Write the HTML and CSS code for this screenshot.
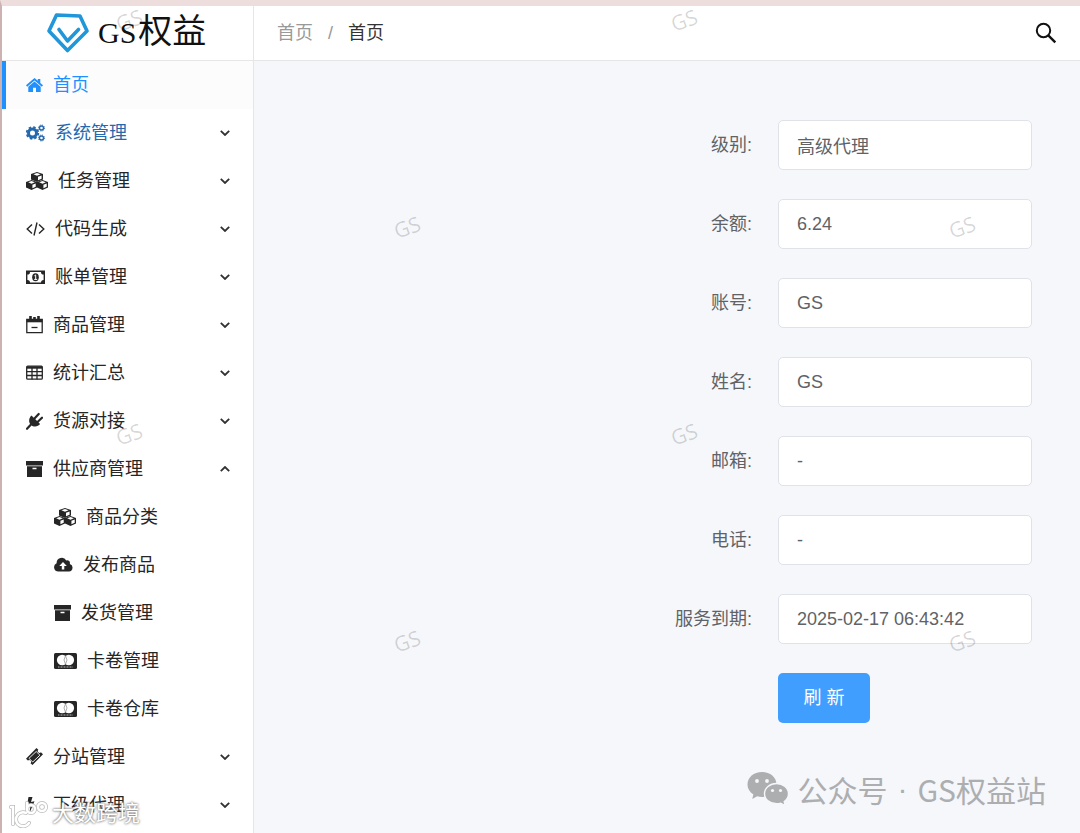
FILE: index.html
```html
<!DOCTYPE html>
<html lang="zh-CN">
<head>
    <meta charset="UTF-8">
    <meta name="viewport" content="width=device-width, initial-scale=1.0">
    <title>GS权益</title>
    <link rel="stylesheet" href="styles.css">
</head>
<body>
    <!-- icons used more than once -->
    <svg class="sprite" aria-hidden="true">
        <symbol id="cube" viewBox="0 0 12 11" preserveAspectRatio="none">
            <path d="M6 0l6 2.200v6L6 11 0 8.200v-6z" fill="currentColor"/>
            <path d="M6 1.100l3.600 1.400L6 4 2.400 2.500zM7 5.300l3.600-1.500v3.500L7 9.200z" fill="#fff"/>
        </symbol>
        <symbol id="cubes" viewBox="0 0 22 18">
            <use href="#cube" x="5" y="0" width="12" height="10"/>
            <use href="#cube" x="0" y="8" width="11" height="10"/>
            <use href="#cube" x="11" y="8" width="11" height="10"/>
        </symbol>
        <symbol id="archive" viewBox="0 0 17 18">
            <path d="M0 1h17v4.500H0zM1 6.300h15V17H1zM6.500 7.800v1.400h4V7.800z" fill="currentColor" fill-rule="evenodd"/>
        </symbol>
        <symbol id="card" viewBox="0 0 23 18">
            <rect y="1" width="23" height="16" rx="1.500" fill="currentColor"/>
            <circle cx="8.200" cy="8" r="5.300" fill="#fff"/>
            <circle cx="14.800" cy="8" r="5.300" fill="#fff"/>
            <path d="M11.500 3.800q-3 4.200 0 8.400q3-4.200 0-8.400z" fill="#fff" stroke="#999" stroke-width=".8"/>
            <path d="M4 15h15" stroke="#bbb" stroke-width="1" stroke-dasharray="1 .5"/>
        </symbol>
        <symbol id="arrow" viewBox="0 0 10 6">
            <path d="M.8.8L5 5 9.200.8" fill="none" stroke="currentColor" stroke-width="1.800"/>
        </symbol>
    </svg>

    <div class="app">
        <aside class="sidebar">
            <div class="logo">
                <svg width="42" height="42" viewBox="0 0 42 42" fill="none" stroke="#2196d8" stroke-linejoin="round" stroke-linecap="round">
                    <path d="M9.500 3L33 4l7 15-19.500 19.500L2 19z" stroke-width="3.600"/>
                    <path d="M12 17.500l8.500 11.500L31.500 17.500" stroke-width="3.600"/>
                </svg>
                <span class="logo-latin">GS</span><span class="logo-name">权益</span>
            </div>

            <nav>
                <ul class="menu">
                    <li>
                        <a href="#" class="menu-item active">
                            <svg width="17" height="18" viewBox="0 0 17 18" fill="currentColor"><path d="M8.500 2L11.800 4.800V3h2.500v4l2.700 2.300-1.200 1.400L8.500 4.500 1.200 10.700 0 9.300zM8.500 5.500l6.200 5.200V16H10v-4.200H7V16H2.300v-5.300z"/></svg>
                            <span>首页</span>
                        </a>
                    </li>
                    <li>
                        <button type="button" class="menu-item hover">
                            <svg width="19" height="18" viewBox="0 0 19 18" fill="none" stroke="currentColor">
                                <circle cx="6.500" cy="9" r="4" stroke-width="3"/>
                                <circle cx="6.500" cy="9" r="5.800" stroke-width="1.800" stroke-dasharray="2.500 2.055"/>
                                <circle cx="15.500" cy="4" r="2" stroke-width="1.400"/>
                                <circle cx="15.500" cy="4" r="3" stroke-width="1" stroke-dasharray="1.200 1.156"/>
                                <circle cx="15.500" cy="14" r="2" stroke-width="1.400"/>
                                <circle cx="15.500" cy="14" r="3" stroke-width="1" stroke-dasharray="1.200 1.156"/>
                            </svg>
                            <span>系统管理</span>
                            <svg class="arrow" width="10" height="6"><use href="#arrow"/></svg>
                        </button>
                    </li>
                    <li>
                        <button type="button" class="menu-item">
                            <svg width="22" height="18"><use href="#cubes"/></svg>
                            <span>任务管理</span>
                            <svg class="arrow" width="10" height="6"><use href="#arrow"/></svg>
                        </button>
                    </li>
                    <li>
                        <button type="button" class="menu-item">
                            <svg width="19" height="18" viewBox="0 0 19 18" fill="none" stroke="currentColor" stroke-width="1.400"><path d="M6 4.500L1.200 9 6 13.500M13 4.500L17.800 9 13 13.500M11 2.500L8 15.500"/></svg>
                            <span>代码生成</span>
                            <svg class="arrow" width="10" height="6"><use href="#arrow"/></svg>
                        </button>
                    </li>
                    <li>
                        <button type="button" class="menu-item">
                            <svg width="19" height="18" viewBox="0 0 19 18">
                                <path d="M0 2.500h19v13.500H0zM4 4a2.600 2.600 0 0 1-2.600 2.600v5.300A2.600 2.600 0 0 1 4 14.500h11a2.600 2.600 0 0 1 2.600-2.600V6.600A2.600 2.600 0 0 1 15 4z" fill="currentColor" fill-rule="evenodd"/>
                                <ellipse cx="9.500" cy="9.300" rx="3.300" ry="4" fill="currentColor"/>
                                <path d="M8.400 7.800l1.300-.9v4.400M8.200 11.400h3" fill="none" stroke="#fff" stroke-width="1"/>
                            </svg>
                            <span>账单管理</span>
                            <svg class="arrow" width="10" height="6"><use href="#arrow"/></svg>
                        </button>
                    </li>
                    <li>
                        <button type="button" class="menu-item">
                            <svg width="17" height="18" viewBox="0 0 17 18" fill="none" stroke="currentColor">
                                <path d="M.8 3.500h15.400v13.200H.8z" stroke-width="1.300"/>
                                <path d="M.5 4.800h16" stroke-width="3"/>
                                <path d="M4.500 0v4.500M8.500 1v3M12.500 0v4.500" stroke-width="2.600"/>
                                <path d="M5.500 11.500h6" stroke-width="1.300"/>
                            </svg>
                            <span>商品管理</span>
                            <svg class="arrow" width="10" height="6"><use href="#arrow"/></svg>
                        </button>
                    </li>
                    <li>
                        <button type="button" class="menu-item">
                            <svg width="17" height="18" viewBox="0 0 17 18" fill="none" stroke="currentColor" stroke-width="1.300">
                                <rect x=".7" y="2.200" width="15.600" height="13" rx="1"/>
                                <path d="M.7 3.500h15.600" stroke-width="2.400"/>
                                <path d="M.7 7.700h15.600M.7 11.500h15.600M6 3.500v12M11 3.500v12"/>
                            </svg>
                            <span>统计汇总</span>
                            <svg class="arrow" width="10" height="6"><use href="#arrow"/></svg>
                        </button>
                    </li>
                    <li>
                        <button type="button" class="menu-item">
                            <svg width="17" height="18" viewBox="0 0 17 18" fill="none" stroke="currentColor" stroke-linecap="round">
                                <path d="M5.500 3.500l8.600 8.600c-2 2.700-6.300 3.500-9.100.9s-2.300-7.100.5-9.500z" fill="currentColor" stroke="none"/>
                                <path d="M8 7l4.700-5M11 10.500l5-4.800M4.500 13L1 16.800" stroke-width="2.200"/>
                            </svg>
                            <span>货源对接</span>
                            <svg class="arrow" width="10" height="6"><use href="#arrow"/></svg>
                        </button>
                    </li>
                    <li>
                        <button type="button" class="menu-item open" aria-expanded="true">
                            <svg width="17" height="18"><use href="#archive"/></svg>
                            <span>供应商管理</span>
                            <svg class="arrow" width="10" height="6"><use href="#arrow"/></svg>
                        </button>
                        <ul class="submenu">
                            <li>
                                <a href="#" class="menu-item">
                                    <svg width="22" height="18"><use href="#cubes"/></svg>
                                    <span>商品分类</span>
                                </a>
                            </li>
                            <li>
                                <a href="#" class="menu-item">
                                    <svg width="19" height="18" viewBox="0 0 19 18"><path d="M4.500 15.500A4.300 4.300 0 0 1 2.600 7.300 5.200 5.200 0 0 1 12.300 4.500a2.700 2.700 0 0 1 3.500 3.400A3.900 3.900 0 0 1 15 15.500zM9 6l-3.700 4h2.500v3.500h2.500V10h2.500z" fill="currentColor" fill-rule="evenodd"/></svg>
                                    <span>发布商品</span>
                                </a>
                            </li>
                            <li>
                                <a href="#" class="menu-item">
                                    <svg width="17" height="18"><use href="#archive"/></svg>
                                    <span>发货管理</span>
                                </a>
                            </li>
                            <li>
                                <a href="#" class="menu-item">
                                    <svg width="23" height="18"><use href="#card"/></svg>
                                    <span>卡卷管理</span>
                                </a>
                            </li>
                            <li>
                                <a href="#" class="menu-item">
                                    <svg width="23" height="18"><use href="#card"/></svg>
                                    <span>卡卷仓库</span>
                                </a>
                            </li>
                        </ul>
                    </li>
                    <li>
                        <button type="button" class="menu-item">
                            <svg width="17" height="18" viewBox="0 0 17 18">
                                <path d="M10.500 0l1.800 1.700a1.800 1.800 0 0 0 2.600 2.600L17 6.300 6.500 17l-2-1.800a1.800 1.800 0 0 0-2.600-2.600L0 10.800z" fill="currentColor"/>
                                <path d="M10.200 3.500l3.700 3.700-7.200 6.800L3 10.300z" fill="none" stroke="#fff" stroke-width=".9"/>
                            </svg>
                            <span>分站管理</span>
                            <svg class="arrow" width="10" height="6"><use href="#arrow"/></svg>
                        </button>
                    </li>
                    <li>
                        <button type="button" class="menu-item">
                            <svg class="bolt" width="9" height="18" viewBox="0 0 9 18" fill="currentColor"><path d="M2.500 1h4L5 6l3.500-.8L3.500 17l1-7.500L.8 10.300z"/></svg>
                            <span>下级代理</span>
                            <svg class="arrow" width="10" height="6"><use href="#arrow"/></svg>
                        </button>
                    </li>
                </ul>
            </nav>
        </aside>

        <div class="content">
            <header class="topbar">
                <nav class="breadcrumb">
                    <a href="#">首页</a>
                    <span>/</span>
                    <strong>首页</strong>
                </nav>
                <button type="button" class="search" aria-label="搜索">
                    <svg width="22" height="22" viewBox="0 0 22 22" fill="none" stroke="#111"><circle cx="8.500" cy="8.500" r="6.700" stroke-width="2"/><path d="M13.300 13.300l7 7" stroke-width="2.400"/></svg>
                </button>
            </header>

            <main>
                <form class="info-form">
                    <div class="form-row">
                        <label for="level">级别:</label>
                        <input type="text" id="level" value="高级代理" readonly>
                    </div>
                    <div class="form-row">
                        <label for="balance">余额:</label>
                        <input type="text" id="balance" value="6.24" readonly>
                    </div>
                    <div class="form-row">
                        <label for="account">账号:</label>
                        <input type="text" id="account" value="GS" readonly>
                    </div>
                    <div class="form-row">
                        <label for="name">姓名:</label>
                        <input type="text" id="name" value="GS" readonly>
                    </div>
                    <div class="form-row">
                        <label for="email">邮箱:</label>
                        <input type="text" id="email" value="-" readonly>
                    </div>
                    <div class="form-row">
                        <label for="phone">电话:</label>
                        <input type="text" id="phone" value="-" readonly>
                    </div>
                    <div class="form-row">
                        <label for="expire">服务到期:</label>
                        <input type="text" id="expire" value="2025-02-17 06:43:42" readonly>
                    </div>
                    <div class="form-row">
                        <div class="form-action">
                            <button type="button" class="refresh">刷 新</button>
                        </div>
                    </div>
                </form>
            </main>
        </div>
    </div>

    <div class="watermark">
        <span class="col-1 row-1">GS</span>
        <span class="col-3 row-1">GS</span>
        <span class="col-2 row-2">GS</span>
        <span class="col-4 row-2">GS</span>
        <span class="col-1 row-3">GS</span>
        <span class="col-3 row-3">GS</span>
        <span class="col-2 row-4">GS</span>
        <span class="col-4 row-4">GS</span>
    </div>

    <div class="official">
        <svg width="42" height="34" viewBox="0 0 42 34">
            <path d="M15 0c8.300 0 14.500 5.300 14.500 12.500S23 25 15 25c-1.800 0-3.300-.2-4.800-.7L5.200 27l1.200-4.500C2.600 20 .5 16.500.5 12.500.5 5.300 6.700 0 15 0z" fill="#adaeb0"/>
            <path d="M29.500 11.500c6.700 0 12 4.500 12 10.300 0 3.200-1.600 6-4.300 7.800l1 3.900-4.500-2.300c-1.300.4-2.700.6-4.200.6-6.700 0-12-4.400-12-10s5.300-10.300 12-10.300z" fill="#adaeb0" stroke="#f5f7fb" stroke-width="1.400"/>
            <g fill="#f5f7fb"><circle cx="10" cy="9" r="1.900"/><circle cx="20" cy="9" r="1.900"/><circle cx="25.500" cy="18.500" r="1.600"/><circle cx="33.500" cy="18.500" r="1.600"/></g>
        </svg>
        <span>公众号</span>
        <span class="dot">·</span>
        <span>GS权益站</span>
    </div>

    <div class="source">
        <svg width="40" height="28" viewBox="0 0 40 28" fill="none" stroke-linecap="round">
            <g stroke="#bbb" stroke-width="4"><path d="M2 7h2v17M17 13a7 7 0 1 0 3 10M18 3v7"/><circle cx="22" cy="9" r="4"/><circle cx="33" cy="7" r="4"/></g>
            <g stroke="#fff" stroke-width="2.500"><path d="M2 7h2v17M17 13a7 7 0 1 0 3 10M18 3v7"/><circle cx="22" cy="9" r="4"/><circle cx="33" cy="7" r="4"/></g>
        </svg>
        <span>大数跨境</span>
    </div>
</body>
</html>
```
FILE: styles.css
```css
* {
    box-sizing: border-box;
}

body {
    margin: 0;
    background-color: #f5f7fb;
    color: #303133;
    font-family: "Liberation Sans", "Noto Sans CJK SC", sans-serif;
    font-size: 18px;
    line-height: 24px;
}

button,
input {
    font: inherit;
    color: inherit;
}

a {
    color: inherit;
    text-decoration: none;
}

ul {
    margin: 0;
    padding: 0;
    list-style: none;
}

.sprite {
    position: absolute;
    width: 0;
    height: 0;
}

.app {
    display: flex;
    min-height: 100vh;
    border-top: 6px solid #eddddd;
    border-left: 2px solid #cdb2b2;
}

/* sidebar */
.sidebar {
    flex: none;
    width: 252px;
    background-color: #fff;
    border-right: 1px solid #e6e6ea;
}

.logo {
    display: flex;
    align-items: center;
    height: 55px;
    padding-left: 45px;
    border-bottom: 1px solid #e6e6e6;
    color: #111;
    line-height: 48px;
}

.logo-latin {
    margin-left: 9px;
    font-family: "Liberation Serif", serif;
    font-size: 30px;
}

.logo-name {
    margin-left: 2px;
    padding-bottom: 4px;
    font-size: 34px;
}

.menu-item {
    display: flex;
    align-items: center;
    gap: 10px;
    width: 100%;
    height: 48px;
    padding: 0 23px 0 24px;
    border: none;
    background: none;
    color: #262626;
    text-align: left;
    cursor: pointer;
}

.menu-item svg {
    flex: none;
}

.menu-item.active {
    padding-left: 20px;
    border-left: 4px solid #1e90ff;
    background-color: #fcfcfc;
    color: #1e90ff;
}

.menu-item.hover {
    color: #2468ad;
}

.menu-item .arrow {
    margin-left: auto;
    color: #303133;
}

.menu-item.open .arrow {
    transform: rotate(180deg);
}

.menu-item .bolt {
    margin: 0 8px 0 0;
}

.submenu .menu-item {
    padding-left: 52px;
}

/* content */
.content {
    flex: 1;
}

.topbar {
    display: flex;
    align-items: center;
    justify-content: space-between;
    height: 55px;
    padding: 0 23px;
    background-color: #fff;
    border-bottom: 1px solid #e6e6e6;
}

.breadcrumb {
    display: flex;
    gap: 15px;
    color: #999;
}

.breadcrumb strong {
    color: #333;
    font-weight: normal;
}

.search {
    display: flex;
    padding: 0;
    border: none;
    background: none;
    cursor: pointer;
}

.info-form {
    display: flex;
    flex-direction: column;
    gap: 29px;
    padding: 59px 48px;
}

.form-row {
    display: flex;
    align-items: center;
    justify-content: flex-end;
    gap: 26px;
    color: #606266;
}

.form-row input,
.form-action {
    width: 254px;
    height: 50px;
}

.form-row input {
    padding: 0 18px;
    border: 1px solid #dfe2e8;
    border-radius: 5px;
    background-color: #fff;
    outline: none;
}

.refresh {
    width: 92px;
    height: 50px;
    border: none;
    border-radius: 5px;
    background-color: #409eff;
    color: #fff;
    cursor: pointer;
}

/* watermarks lie over the whole page */
.watermark,
.official,
.source {
    pointer-events: none;
}

.watermark span {
    position: absolute;
    width: 30px;
    color: rgba(0, 0, 0, 0.16);
    font-family: "Open Sans", sans-serif;
    font-size: 21px;
    text-align: center;
    transform: rotate(-20deg);
}

.col-1 { left: 114px; }
.col-2 { left: 392px; }
.col-3 { left: 669px; }
.col-4 { left: 947px; }

.row-1 { top: 8px; }
.row-2 { top: 215px; }
.row-3 { top: 422px; }
.row-4 { top: 629px; }

.official {
    position: absolute;
    right: 34px;
    top: 767px;
    display: flex;
    align-items: center;
    gap: 8px;
    color: #adaeb0;
    font-family: "Noto Sans CJK SC", sans-serif;
    font-size: 30px;
    line-height: 44px;
}

.official .dot {
    padding: 0 2px;
    font-family: "Liberation Sans", sans-serif;
}

.source {
    position: absolute;
    left: 9px;
    top: 799px;
    display: flex;
    align-items: center;
    gap: 3px;
    color: #fff;
    font-size: 22px;
    line-height: 30px;
    text-shadow: 0 0 2px #777, 0 0 3px #888;
}
```
